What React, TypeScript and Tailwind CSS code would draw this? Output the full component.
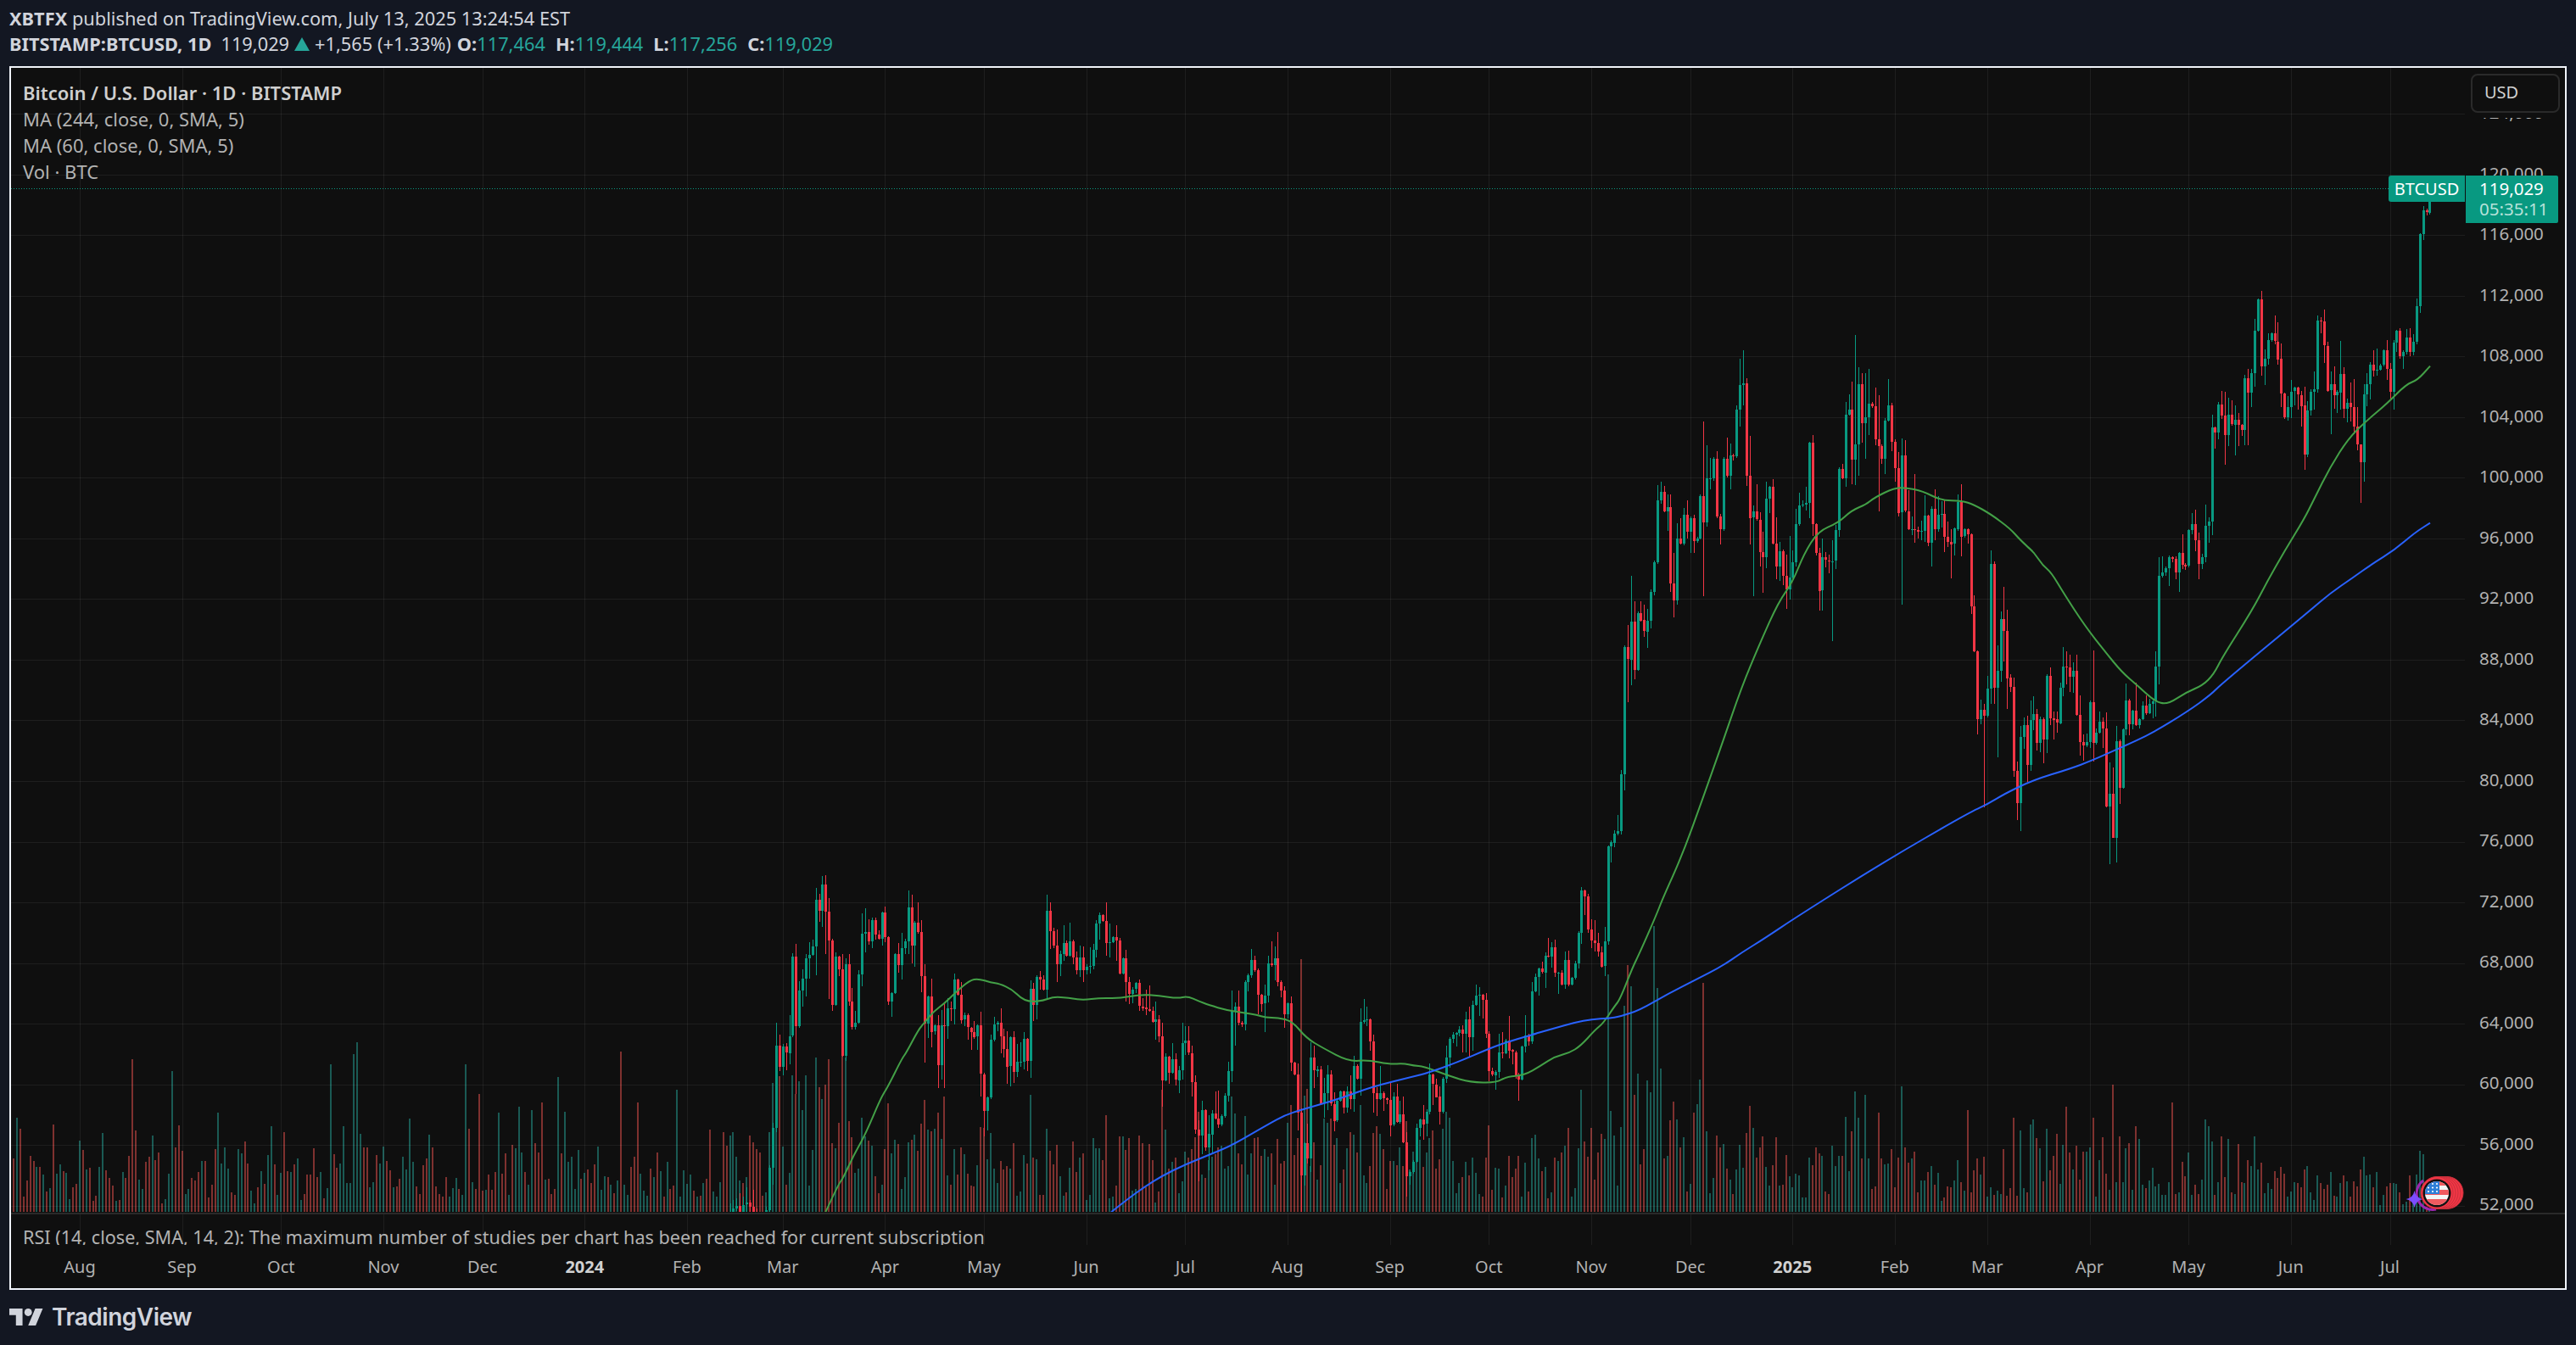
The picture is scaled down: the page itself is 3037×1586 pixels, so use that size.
import { FC } from "react";

// chart numbers were read off the picture, in page pixels or zoomed crop pixels
type Seg = { ox: number; oy: number; sy?: number; pts: number[] };

const closeSegs: Seg[] = [
  { ox: 850, oy: 1000, pts: [35,1290,47,1275,59,1265,71,1285,83,1262,95,1255,107,1270,119,1290,131,1310,143,1320,155,1282,165,1280,175,1130,187,990,199,700,208,775,220,703,232,725,244,665,256,385,268,632,280,505,292,462,304,390,314,378,325,348,338,183,350,222,361,128,373,224,385,326,397,555,409,385,418,430,430,735,442,412,454,543,466,632,478,618,490,448,502,304,514,297,523,330,535,255,547,305,559,320,571,228,583,316,595,543,607,513,619,375,628,414,640,355,652,330,664,210,676,345,688,265,700,297,712,452,724,620,735,525,745,650,757,628,770,768,781,628,793,630,805,568,817,570,829,465,841,518,851,608,863,592,875,635,886,650,898,668,910,628,922,800,934,930,946,882,957,678,968,624,980,618,991,666,1003,710,1015,773,1027,670,1039,794,1051,757,1062,757,1073,676,1085,753,1097,498,1109,555,1120,457,1132,465,1144,500,1156,222,1165,293,1177,345,1189,410,1201,375,1213,336,1225,380,1237,330,1249,388,1261,432,1273,388,1282,432,1294,420,1306,418,1318,360,1330,267,1342,238,1354,258,1366,335,1378,333,1388,315,1399,327,1411,443,1423,390,1435,473,1447,515,1459,500,1471,478,1483,560] },
  { ox: 1350, oy: 1000, pts: [4,570,16,577,28,615,40,605,52,665,64,822,76,738,88,795,98,748,110,820,122,785,134,690,146,682,157,725,169,828,181,995,193,1017,202,928,214,1060,226,1012,238,938,250,957,262,977,274,948,286,876,298,790,310,577,320,562,332,618,343,624,355,474,367,450,379,396,391,432,403,518,415,550,425,522,437,408,449,414,461,390,473,474,485,503,497,588,509,549,521,758,530,800,542,935,554,1158,566,1045,578,1098,590,742,602,788,613,783,625,905,635,868,647,802,659,905,671,965,683,895,695,862,707,920,719,862,731,888,743,770,752,815,763,615,775,608,787,606,799,684,811,866,823,888,835,866,847,885,857,890,869,980,881,880,892,970,904,942,916,1040,928,1160,940,1146,952,1110,963,990,974,960,985,977,997,934,1009,802,1021,836,1033,880,1045,933,1057,816,1067,740,1078,675,1090,660,1102,655,1114,643,1126,657,1138,605,1150,668,1162,555,1172,522,1183,519,1195,537,1207,658,1219,790,1231,803,1243,792,1255,723,1267,725,1278,680,1288,715,1300,722,1312,805,1324,820,1336,702,1348,664,1360,684,1372,508,1384,457,1394,427,1406,440,1417,381,1429,385,1441,351,1453,442,1465,440,1477,482] },
  { ox: 1800, oy: 1080, pts: [139,156,148,243,160,220,172,168,184,60,196,-90,208,-69,220,48,232,87,244,97,253,128,265,178,277,90] },
  { ox: 1780, oy: 560, sy: 2.8, pts: [349,1227,361,1213,373,1183,385,1175,397,988,409,568,418,608,430,483,442,643,454,455,466,480,478,517,490,482,502,387,514,288,526,85,536,57,547,120,559,107,571,358,583,413,595,210,607,227,619,132,631,188,640,143,652,218,664,210,676,70,688,157] },
  { ox: 1900, oy: 380, pts: [340,552,352,552,364,483,376,687,385,732,397,484,409,545,421,472,433,474,445,308,457,222,469,216,481,542,490,692,502,670,514,698,526,812,538,831,550,624,562,582,574,782,586,864,598,810,607,896,619,945,631,903,643,850,655,714,667,648,679,645,691,640,703,427,712,714,724,815,736,950,748,832,760,842,772,846,784,845,796,736,808,519,817,551,829,327,841,309,853,485,865,432,877,220,889,357,901,337,913,288,922,296,934,414,946,437,958,483,970,348,982,294,994,422,1006,515,1018,674,1027,472,1039,668,1051,732,1063,732,1075,735,1087,740,1099,738,1111,685,1123,780,1135,660,1144,732,1156,681,1168,678,1180,758,1192,776,1204,785,1216,730,1228,635,1240,758,1249,733,1261,750] },
  { ox: 2320, oy: 640, pts: [13,225,25,383,37,623,49,591,61,612,73,516,85,76,94,513,106,453,118,270,130,311,142,478,154,510,166,807,178,920,190,687,199,645,211,785,223,627,235,605,247,707,259,624,271,697,283,471,295,620,307,625,316,638,328,513,340,438,352,440,364,473,376,453,388,608,400,705,412,717,421,705,433,564,445,708,457,672,469,633,481,656,493,932,505,888,517,1045,526,702,538,866,550,660,562,558,574,643,586,595,598,645,610,624,622,576,631,602,643,570,655,560,667,438] },
  { ox: 2520, oy: 220, pts: [79,1377,91,1365,103,1350,115,1312,127,1318,136,1365,148,1295,160,1338,172,1343,184,1216,196,1194,208,1252,220,1335,232,1312,244,1200,253,1186,265,852,277,870,289,770,301,810,313,880,325,808,337,842,349,825,358,843,370,860,382,678,394,728,406,660,418,510,430,400,442,638,454,610,463,543,475,520,487,548,499,610,511,732,523,815,535,780,547,725,559,712,568,737,580,775,592,948,604,793,616,727,628,718,640,475,652,478,664,563,676,722,688,700,697,738,709,727,721,662,733,785,745,765,757,780,769,850,781,912,790,975,802,735,814,700,826,630,838,652,850,648,862,632,874,580,886,645,895,725,907,552,919,510,931,600,943,585,955,535,967,585,979,550,991,423,1000,168,1012,85,1024,92,1036,8] },
];

// [x, high, low] in crop pixels, -1 leaves the generated wick
const wickSegs: Seg[] = [
  { ox: 850, oy: 1000, pts: [199,618,1005,262,340,870,338,140,450,361,100,-1,373,95,375,385,-1,535,397,-1,575,502,232,490,514,213,-1,664,150,-1,724,410,760,745,462,705,770,590,850,793,550,850,829,445,-1,934,795,1020,922,580,880,946,-1,1000,1165,192,-1,1237,265,-1,1366,192,380] },
  { ox: 1350, oy: 1000, pts: [16,487,-1,64,-1,915,146,630,-1,181,-1,1010,193,-1,1180,226,-1,1140,250,860,-1,262,858,990,298,755,-1,320,545,700,332,505,-1,425,-1,650,449,330,-1,473,297,488,554,920,1290,590,688,-1,743,735,-1,763,568,-1,787,560,630,811,660,935,823,-1,948,835,770,-1,928,-1,1232,1172,483,-1,1288,595,-1,1324,-1,893,1453,325,-1] },
  { ox: 1780, oy: 560, sy: 2.8, pts: [430,333,693,418,-1,752,442,417,675,583,258,470,688,-20,403] },
  { ox: 1900, oy: 380, pts: [70,897,1283,58,1070,1345,223,817,1043,328,350,970,340,435,-1,409,408,-1,469,98,-1,457,128,368,481,198,-1,502,648,970,490,402,785,514,573,-1,538,740,957,574,555,-1,586,690,908,607,-1,930,619,822,1013,631,755,980,712,400,755,736,797,1020,784,770,1127,817,500,-1,865,45,575,853,210,572,901,180,482,913,165,400,877,160,543,946,258,668,982,200,-1,1027,412,1000,1075,538,780,1135,-1,863,1240,573,827,1204,-1,905] },
  { ox: 2320, oy: 640, pts: [61,570,935,85,27,570,94,66,570,106,363,760,130,155,420,142,237,587,178,-1,980,190,648,1020,211,612,845,271,-1,780,295,440,645,340,368,543,352,385,500,364,395,527,445,380,775,505,778,1138,526,648,1130,517,795,1045,538,695,923,598,495,648,667,385,-1] },
  { ox: 2520, oy: 220, pts: [313,725,985,394,645,915,349,775,950,592,708,1003,790,975,1120,769,680,-1,802,700,1043,685,-1,875,721,547,790,1036,-10,100] },
];

// tops of the volume bars, crop pixels. Negative is red where no candle decides it
const volLeft: Seg = { ox: 12, oy: 1220, pts: [5,487,15,-438,27,294,39,-333,51,-573,63,-516,75,-429,84,-447,96,468,108,-468,120,495,132,-555,144,543,156,-318,168,492,180,459,188,-483,200,489,212,582,225,-540,237,-528,249,375,261,-408,273,477,285,-471,294,-588,306,-570,318,468,330,348,342,-480,354,-507,366,-534,378,588,390,-585,399,486,411,-507,423,-429,435,-87,447,-339,459,513,471,546,483,-450,495,-432,504,357,516,-444,528,-417,540,-597,552,582,564,492,576,129,588,-399,600,-321,612,-411,620,564,633,546,645,-507,657,-516,669,-486,681,447,693,-447,705,-576,717,-531,726,-405,738,276,750,456,762,399,774,474,786,-558,798,-567,810,405,822,420,831,-378,843,-456,855,552,867,597,879,-540,891,483,903,-528,915,426,927,324,936,-459,948,567,960,489,972,-345,984,-483,996,486,1008,-459,1020,438,1032,585,1041,-564,1053,-495,1065,-495,1077,-402,1089,-504,1101,486,1113,-579,1125,543,1137,105,1149,-423,1158,-471,1170,456,1182,324,1194,525,1206,525,1218,69,1230,27,1242,351,1254,-399,1263,-399,1275,540,1287,522,1299,-426,1311,456,1323,396,1335,-447,1347,-480,1359,540,1368,-537,1380,-510,1392,432,1404,477,1416,297,1428,450,1440,-537,1452,-564,1464,-462,1473,-438,1485,354,1497,-399] };

const volSegs: Seg[] = [
  { ox: 850, oy: 1000, pts: [2,1182,12,1005,24,1053,36,1018,45,1005,57,1092,69,1176,81,1185,93,1164,105,1018,117,1042,129,1065,141,1077,150,1230,162,1218,174,1005,186,831,198,960,210,807,222,1056,234,1191,246,1149,255,804,267,870,279,825,291,927,303,804,315,1194,327,1068,339,741,351,846,360,888,372,837,384,747,396,1044,408,1062,420,972,432,735,444,742,456,966,465,1023,477,1149,489,1134,501,954,513,1020,525,1035,537,1053,549,1161,561,1221,573,1191,582,1065,594,903,606,1080,618,1032,630,1047,642,1206,654,1164,666,1041,678,1032,687,1014,699,1071,711,975,723,891,735,996,747,1002,759,993,771,936,783,1029,792,879,804,1158,816,1191,828,1065,840,1155,852,1059,864,1083,876,1152,888,1194,897,1197,909,1122,921,987,933,990,945,1101,957,1008,969,1134,981,1185,993,1107,1005,1137,1014,1125,1026,1134,1038,1044,1050,1230,1062,1215,1074,1086,1086,1116,1098,873,1110,1095,1119,1101,1131,1227,1143,1227,1155,993,1167,1071,1179,1119,1191,1050,1203,1161,1215,1230,1224,1218,1236,1131,1248,1038,1260,1146,1272,1095,1284,1080,1296,1245,1308,1227,1320,1026,1329,1062,1341,1062,1353,1104,1365,945,1377,1239,1389,1233,1401,1194,1413,1020,1425,1020,1434,1068,1446,1026,1458,1212,1470,1206,1482,1017,1494,1044] },
  { ox: 1350, oy: 1000, pts: [5,1200,17,1048,29,1104,41,1254,50,1215,62,855,74,996,86,1134,98,1110,110,1095,122,1221,134,1179,146,1074,158,1095,167,1065,179,1023,191,933,203,1155,215,1167,227,1105,239,1092,251,1083,260,1059,272,1053,284,1134,296,1125,308,879,320,939,332,1080,344,1119,356,948,365,1155,377,1080,389,1026,401,1023,413,1089,425,1065,437,1092,449,1080,461,1191,473,1029,482,1116,494,1107,506,972,518,909,530,1086,542,1026,554,393,566,876,578,852,590,1125,602,1041,611,1173,623,1122,635,957,647,972,659,957,671,1050,683,1026,695,1185,707,1137,719,1062,728,1005,740,1014,752,1077,764,909,776,1158,788,1185,800,1125,812,1008,824,984,836,1011,848,1065,860,1206,872,1107,881,1107,893,1122,905,1059,917,1125,929,966,941,1137,953,1074,965,1110,977,1032,989,1077,1001,1026,1013,999,1025,1203,1033,1134,1045,1101,1057,993,1069,933,1081,954,1093,1107,1105,1221,1117,1185,1126,1164,1138,1110,1150,1158,1162,1095,1174,1149,1186,1224,1198,1233,1210,1095,1222,981,1234,1020,1243,1131,1255,1134,1267,1236,1279,1194,1291,1089,1303,1164,1315,1134,1327,1089,1339,1113,1351,1209,1363,1218,1372,1026,1384,1014,1396,1098,1408,1143,1420,1128,1432,1239,1444,1218,1456,1095,1468,1107] },
  { ox: 1800, oy: 1080, pts: [9,975,21,786,33,774,45,858,57,903,69,888,81,999,90,978,102,855,114,867,126,837,138,813,150,750,162,993,174,963,186,822,198,615,207,798,219,852,231,750,243,933,255,837,267,771,279,789,291,207,303,690,312,777,324,954,336,747,348,318,360,174,372,249,384,633,396,558,408,879,417,825,429,582,441,624,453,36,465,255,477,540,489,858,501,849,513,723,522,657,534,720,546,819,558,783,570,975,582,948,594,696,606,666,618,579,630,237,639,762,651,981,663,927,675,777,687,819,699,807,711,894,723,933,735,984,744,897,756,810,768,891,780,768,792,672,804,750,816,855,828,819,840,780,849,888,861,954,873,882,885,783,897,954,909,951,921,846,933,921,945,960,954,912,966,918,978,996,990,996,1002,855,1014,882,1026,819,1038,840,1050,849,1059,975,1071,984,1083,813,1095,885,1107,849,1119,849,1131,711,1143,903,1155,762,1167,621,1176,714,1188,858,1200,633,1212,858,1224,966,1236,957,1248,696,1260,858,1272,879,1281,876,1293,825,1305,960,1317,855,1329,603,1341,819,1353,873,1365,858,1377,834,1386,978,1398,936,1410,936,1422,906,1434,885,1446,951,1458,909,1470,1008,1482,996,1491,957] },
  { ox: 2650, oy: 1300, pts: [5,205,15,225,27,120,39,237,51,213,63,321,75,285,87,306,99,243,111,267,123,228,132,252,144,333,156,315,168,282,180,285,192,300,204,237,216,225,228,318,237,345,249,258,261,285,273,306,285,291,297,246,309,330,321,333,333,285,342,258,354,279,366,333,378,279,390,297,402,237,414,192,426,258,438,255,447,300,459,246,471,363,483,327,495,297,507,285,519,285,531,288,543,318,555,360,567,350,579,330,591,290,600,255,612,171,624,183,636,370,648,378] },
];

// page pixels; a few spikes in the stretches that only have filler
const volSpikes: number[] = [548,1255,566,1290,640,1300,659,1270,732,1240,752,1300,800,1285,2398,1320,2436,1305,2490,1279,2500,1340,2560,1300,2598,1320];

const greenMa: Seg[] = [
  { ox: 850, oy: 1000, pts: [370,1288,415,1190,432,1168,470,1085,510,1015,565,885,590,845,640,745,655,725,700,640,720,618,750,580,790,550,830,510,880,468,910,462,955,476,985,480,1030,500,1060,530,1090,544,1140,540,1175,526,1230,530,1280,538,1340,530,1410,532,1480,518] },
  { ox: 1350, oy: 1000, pts: [50,522,115,532,150,524,190,542,225,555,290,574,350,583,395,590,425,600,470,600,520,612,570,672,630,708,720,755,790,750,865,765,915,762,950,770,985,772,1080,808,1150,828,1240,831,1280,808,1340,804,1400,770,1450,737,1500,725] },
  { ox: 1800, oy: 1080, pts: [190,460,240,405,270,380,310,320,330,295,375,180,400,130,457,0] },
  { ox: 1780, oy: 560, sy: 2.8, pts: [540,1400,610,1255,680,1075,750,890,820,700,885,555] },
  { ox: 1900, oy: 380, pts: [590,990,640,920,680,820,730,740,800,710,850,665,900,645,930,620,1000,586,1040,585,1100,597,1165,630,1240,632,1280,645,1340,678,1410,730,1445,770,1500,820] },
  { ox: 2320, oy: 640, pts: [195,0,235,35,265,80,295,105,340,180,415,295,485,385,545,458,600,505,660,560,705,573,770,530,830,505,870,465,900,405] },
  { ox: 2520, oy: 220, pts: [405,1500,460,1395,520,1290,590,1175,625,1105,680,995,750,885,820,820,880,770,950,700,990,685,1035,635] },
];

const blueMa: Seg[] = [
  { ox: 850, oy: 1000, pts: [1380,1288,1430,1248] },
  { ox: 1350, oy: 1000, pts: [0,1197,60,1160,140,1120,240,1080,310,1050,430,980,500,942,590,915,700,883,800,845,950,808,1000,795,1100,760,1220,708,1300,680,1400,652] },
  { ox: 1800, oy: 1080, pts: [0,425,100,397,170,377,230,366,290,362,330,356,400,333,500,275,600,225,690,178,760,130,840,80,960,0] },
  { ox: 2220, oy: 1017, pts: [0,0] },
  { ox: 2320, oy: 640, pts: [0,957,70,925,130,888,230,840,360,800,440,770,540,725,650,675,780,595,860,537,900,497] },
  { ox: 2520, oy: 220, pts: [610,1500,680,1440,760,1385,830,1335,910,1285,980,1225,1035,1190] },
];

const DAY = 3.891;
const FIRST = -21;
const LAST = 712;
const barX = (d: number) => 94 + DAY * d;
const dayOf = (x: number) => Math.round((x - 94) / DAY);

const segToPoints = (s: Seg) => {
  const out: [number, number][] = [];
  for (let i = 0; i < s.pts.length; i += 2) {
    out.push([s.ox + s.pts[i] / 3, s.oy + Math.abs(s.pts[i + 1]) / (s.sy ?? 3)]);
  }
  return out;
};

let seed = 20250713;
const rnd = () => {
  seed = (seed + 0x6d2b79f5) | 0;
  let t = Math.imul(seed ^ (seed >>> 15), 1 | seed);
  t = (t + Math.imul(t ^ (t >>> 7), 61 | t)) ^ t;
  return ((t ^ (t >>> 14)) >>> 0) / 4294967296;
};

const closes = new Map<number, number>();
closeSegs.forEach((s) => segToPoints(s).forEach(([x, y]) => closes.set(dayOf(x), y)));
// the -90 and -69 above sit over the top of the crop they were read from
closes.set(dayOf(1800 + 196 / 3), 1050);
closes.set(dayOf(1800 + 208 / 3), 1057);

const closeAt = (d: number): number => {
  if (closes.has(d)) return closes.get(d)!;
  let a = d - 1;
  let b = d + 1;
  while (a > 150 && !closes.has(a)) a--;
  while (b <= LAST && !closes.has(b)) b++;
  if (!closes.has(a)) return 1480;
  if (!closes.has(b)) return closes.get(a)!;
  return closes.get(a)! + ((closes.get(b)! - closes.get(a)!) * (d - a)) / (b - a);
};

const wicks = new Map<number, [number, number]>();
wickSegs.forEach((s) => {
  const k = s.sy ?? 3;
  for (let i = 0; i < s.pts.length; i += 3) {
    wicks.set(dayOf(s.ox + s.pts[i] / 3), [
      s.pts[i + 1] === -1 ? -1 : s.oy + s.pts[i + 1] / k,
      s.pts[i + 2] === -1 ? -1 : s.oy + s.pts[i + 2] / k,
    ]);
  }
});

const vols = new Map<number, number>();
const volSign = new Map<number, boolean>();
for (let i = 0; i < volLeft.pts.length; i += 2) {
  const d = dayOf(volLeft.ox + volLeft.pts[i] / 3);
  vols.set(d, volLeft.oy + Math.abs(volLeft.pts[i + 1]) / 3);
  volSign.set(d, volLeft.pts[i + 1] > 0);
}
volSegs.forEach((s) => segToPoints(s).forEach(([x, y]) => vols.set(dayOf(x), y)));
for (let i = 0; i < volSpikes.length; i += 2) vols.set(dayOf(volSpikes[i]), volSpikes[i + 1]);

type Bar = { x: number; open: number; close: number; high: number; low: number; up: boolean; vol: number; volUp: boolean };

const bars: Bar[] = [];
for (let d = FIRST; d <= LAST; d++) {
  const close = closeAt(d);
  const open = closeAt(d - 1);
  const top = Math.min(open, close);
  const bottom = Math.max(open, close);
  const r1 = rnd();
  const r2 = rnd();
  const w = wicks.get(d);
  const high = w && w[0] !== -1 ? w[0] : top - 1 - r1 * r1 * 24;
  const low = w && w[1] !== -1 ? w[1] : bottom + 1 + r2 * r2 * 24;
  const up = close <= open;
  const vol = vols.has(d) ? vols.get(d)! : 1429 - (18 + rnd() * rnd() * 115);
  const volUp = d < 205 ? (volSign.has(d) ? volSign.get(d)! : rnd() > 0.5) : up;
  bars.push({ x: barX(d), open, close, high, low, up, vol, volUp });
}

// rounds the corners between the read-off points
const toSmoothPath = (segs: Seg[]) => {
  const p = segs.flatMap(segToPoints);
  let d = `M${p[0][0].toFixed(1)} ${p[0][1].toFixed(1)}`;
  for (let i = 1; i < p.length - 1; i++) {
    const mx = (p[i][0] + p[i + 1][0]) / 2;
    const my = (p[i][1] + p[i + 1][1]) / 2;
    d += ` Q${p[i][0].toFixed(1)} ${p[i][1].toFixed(1)} ${mx.toFixed(1)} ${my.toFixed(1)}`;
  }
  const last = p[p.length - 1];
  return `${d} L${last[0].toFixed(1)} ${last[1].toFixed(1)}`;
};

const MONTHS = [
  { label: "Aug", days: 31 }, { label: "Sep", days: 30 }, { label: "Oct", days: 31 }, { label: "Nov", days: 30 },
  { label: "Dec", days: 31 }, { label: "2024", days: 31, bold: true }, { label: "Feb", days: 29 }, { label: "Mar", days: 31 },
  { label: "Apr", days: 30 }, { label: "May", days: 31 }, { label: "Jun", days: 30 }, { label: "Jul", days: 31 },
  { label: "Aug", days: 31 }, { label: "Sep", days: 30 }, { label: "Oct", days: 31 }, { label: "Nov", days: 30 },
  { label: "Dec", days: 31 }, { label: "2025", days: 31, bold: true }, { label: "Feb", days: 28 }, { label: "Mar", days: 31 },
  { label: "Apr", days: 30 }, { label: "May", days: 31 }, { label: "Jun", days: 30 }, { label: "Jul", days: 31 },
];

const tickXs: number[] = [];
MONTHS.reduce((d, m) => {
  tickXs.push(Math.round(barX(d)));
  return d + m.days;
}, 0);

const PRICES = Array.from({ length: 19 }, (_, i) => 124000 - i * 4000);
const priceY = (p: number) => 277.3 + ((116000 - p) / 4000) * 71.52;

const px = (n: number) => Math.round(n);

const FlagBadge: FC = () => (
  <g>
    <path d="M2857 1392 A19 19 0 0 0 2872 1426" fill="none" stroke="#9c27b0" strokeWidth="3" />
    <path d="M2846.5 1404 Q2848 1412.5 2856.5 1414 Q2848 1415.5 2846.5 1424 Q2845 1415.5 2836.5 1414 Q2845 1412.5 2846.5 1404 Z" fill="#7c4dff" />
    {[2885, 2882, 2879, 2876, 2873].map((cx) => (
      <circle key={cx} cx={cx} cy={1406.5} r={19} fill="#f23645" stroke="#c9303c" strokeWidth="1" />
    ))}
    <circle cx={2873} cy={1407} r={16.5} fill="#111" />
    <clipPath id="flag-clip">
      <circle cx={2873} cy={1407} r={14} />
    </clipPath>
    <g clipPath="url(#flag-clip)">
      <rect x={2858} y={1392} width={30} height={30} fill="#f5f5f5" />
      <rect x={2858} y={1392} width={30} height={6} fill="#f05a5f" />
      <rect x={2858} y={1403} width={30} height={6} fill="#f05a5f" />
      <rect x={2858} y={1414} width={30} height={8} fill="#f05a5f" />
      <rect x={2858} y={1392} width={18} height={16} fill="#2f7fd8" />
      {[2863, 2868, 2873].flatMap((x) =>
        [1396, 1400.5, 1405].map((y) => <circle key={`${x}-${y}`} cx={x} cy={y} r={1.1} fill="#fff" />)
      )}
    </g>
  </g>
);

const ChartSvg: FC = () => (
  <svg viewBox="13 80 2893 1350" width={2893} height={1350} className="block" shapeRendering="crispEdges">
    <defs>
      <clipPath id="plot-clip">
        <rect x={13} y={80} width={2893} height={1349} />
      </clipPath>
    </defs>
    <g clipPath="url(#plot-clip)">
      {bars.map((b, i) => (
        <rect key={i} x={px(b.x - 1)} y={px(b.vol)} width={2} height={Math.max(1429 - px(b.vol), 0)} fill={b.volUp ? "#1a5a54" : "#7f312f"} />
      ))}
      {PRICES.map((p) => (
        <rect key={p} x={13} y={px(priceY(p))} width={2893} height={1} fill="#f2f2f2" fillOpacity={0.07} />
      ))}
      {tickXs.map((x) => (
        <rect key={x} x={x} y={80} width={1} height={1350} fill="#f2f2f2" fillOpacity={0.07} />
      ))}
      <line x1={13} y1={222.5} x2={2816} y2={222.5} stroke="#089981" strokeDasharray="1 2" />
      {bars.map((b, i) => {
        const color = b.up ? "#089981" : "#f23645";
        const top = Math.min(b.open, b.close);
        const h = Math.max(Math.abs(b.open - b.close), 1);
        const cx = px(b.x);
        return (
          <g key={i} fill={color}>
            <rect x={cx} y={px(b.high)} width={1} height={Math.max(px(b.low) - px(b.high), 1)} />
            <rect x={cx - 1} y={px(top)} width={3} height={Math.max(px(h), 1)} />
          </g>
        );
      })}
      <g shapeRendering="geometricPrecision" fill="none" strokeWidth="2" strokeLinejoin="round">
        <path d={toSmoothPath(greenMa)} stroke="#43a047" />
        <path d={toSmoothPath(blueMa)} stroke="#2962ff" />
      </g>
      <g shapeRendering="geometricPrecision">
        <FlagBadge />
      </g>
    </g>
  </svg>
);

const PriceAxis: FC = () => (
  <div className="relative flex-1 overflow-hidden pt-[16.5px]">
    {PRICES.map((p) => (
      <div key={p} className="h-[71.52px] flex items-center pl-[17px] text-[20.5px] leading-none text-[#b2b2b2]">
        {p.toLocaleString("en-US")}
      </div>
    ))}
    <div className="absolute top-0 inset-x-0 h-[59px] bg-[#0f0f0f] pl-[7px] pt-[7px]">
      <div className="w-[105px] h-[46px] rounded-[8px] border-2 border-[#2a2a2a] pl-[14px] pb-[2px] flex items-center text-[20px] text-[#d1d1d1]">
        USD
      </div>
    </div>
    <div className="absolute left-[1px] top-[127px] w-[109px] h-[56px] bg-[#089981] rounded-r-[2px] pl-[16px] pt-[3px] text-[20.5px] leading-[24px]">
      <div className="text-white">119,029</div>
      <div className="text-[#b7e2da]">05:35:11</div>
    </div>
  </div>
);

const TimeAxis: FC = () => (
  <div className="flex pl-[81px] items-center h-[51px] pt-[1px] text-[20px] text-[#b2b2b2]">
    {MONTHS.map((m, i) => (
      <div key={i} className="shrink-0" style={{ width: m.days * DAY }}>
        <span className={`inline-block -translate-x-1/2 ${m.bold ? "font-bold text-[#d1d1d1]" : ""}`}>{m.label}</span>
      </div>
    ))}
  </div>
);

const Legend: FC = () => (
  <div className="absolute left-[14px] top-[14px] flex flex-col text-[22px] leading-[31px] text-[#b2b2b2]">
    <div className="font-semibold text-[#cfcfcf]">Bitcoin / U.S. Dollar · 1D · BITSTAMP</div>
    <div>MA (244, close, 0, SMA, 5)</div>
    <div>MA (60, close, 0, SMA, 5)</div>
    <div>Vol · BTC</div>
  </div>
);

const Quote: FC<{ k: string; v: string }> = ({ k, v }) => (
  <span>
    <b className="font-bold">{k}</b>
    <span className="text-[#26a69a]">{v}</span>
  </span>
);

const App: FC = () => {
  return (
    <div className="w-[3037px] h-[1586px] bg-[#131722] flex flex-col font-['Noto_Sans',sans-serif] text-[#d1d4dc] overflow-hidden">
      <header className="h-[78px] pl-[11px] pt-[7px] text-[21.8px] leading-[30px]">
        <div>
          <b className="font-bold">XBTFX</b> published on TradingView.com, July 13, 2025 13:24:54 EST
        </div>
        <div className="flex items-center">
          <b className="font-bold">BITSTAMP:BTCUSD, 1D</b>
          <span className="ml-[11px]">119,029</span>
          <svg viewBox="0 0 18 16" width={18} height={16} className="mx-[6px]">
            <path d="M9 0 L18 16 L0 16 Z" fill="#26a69a" />
          </svg>
          <span>+1,565 (+1.33%)</span>
          <span className="ml-[7px] flex gap-[12px]">
            <Quote k="O:" v="117,464" />
            <Quote k="H:" v="119,444" />
            <Quote k="L:" v="117,256" />
            <Quote k="C:" v="119,029" />
          </span>
        </div>
      </header>

      <main className="ml-[11px] w-[3015px] h-[1443px] shrink-0 border-2 border-[#f0f3fa] bg-[#0f0f0f] flex flex-col">
        <div className="relative flex h-[1350px] shrink-0">
          <ChartSvg />
          <PriceAxis />
          <Legend />
          <div className="absolute left-[2803px] top-[127px] w-[90px] h-[31px] bg-[#089981] rounded-l-[3px] flex items-center justify-center text-[20px] text-white">
            BTCUSD
          </div>
        </div>
        <div className="relative h-[38px] shrink-0 border-t-2 border-[#2a2a2a] overflow-hidden">
          <svg viewBox="13 0 2893 38" width={2893} height={38} className="absolute left-0 top-0" shapeRendering="crispEdges">
            {tickXs.map((x) => (
              <rect key={x} x={x} y={0} width={1} height={38} fill="#f2f2f2" fillOpacity={0.07} />
            ))}
          </svg>
          <p className="relative pl-[14px] pt-[13px] text-[21.6px] leading-[28px] text-[#b2b2b2] whitespace-nowrap">
            RSI (14, close, SMA, 14, 2): The maximum number of studies per chart has been reached for current subscription
          </p>
        </div>
        <TimeAxis />
      </main>

      <footer className="flex items-center pl-[11px] pt-[18px] gap-[10px]">
        <svg viewBox="0 4 36 18" width={40} height={20}>
          <path d="M14 22H7V11H0V4h14v18zM28 22h-8l7.5-18h8L28 22z" fill="#d1d4dc" />
          <circle cx="20" cy="8" r="4" fill="#d1d4dc" />
        </svg>
        <span className="font-['Inter',sans-serif] font-semibold text-[28px] leading-none tracking-[-0.5px] text-[#d1d4dc]">TradingView</span>
      </footer>
    </div>
  );
};

export default App;
